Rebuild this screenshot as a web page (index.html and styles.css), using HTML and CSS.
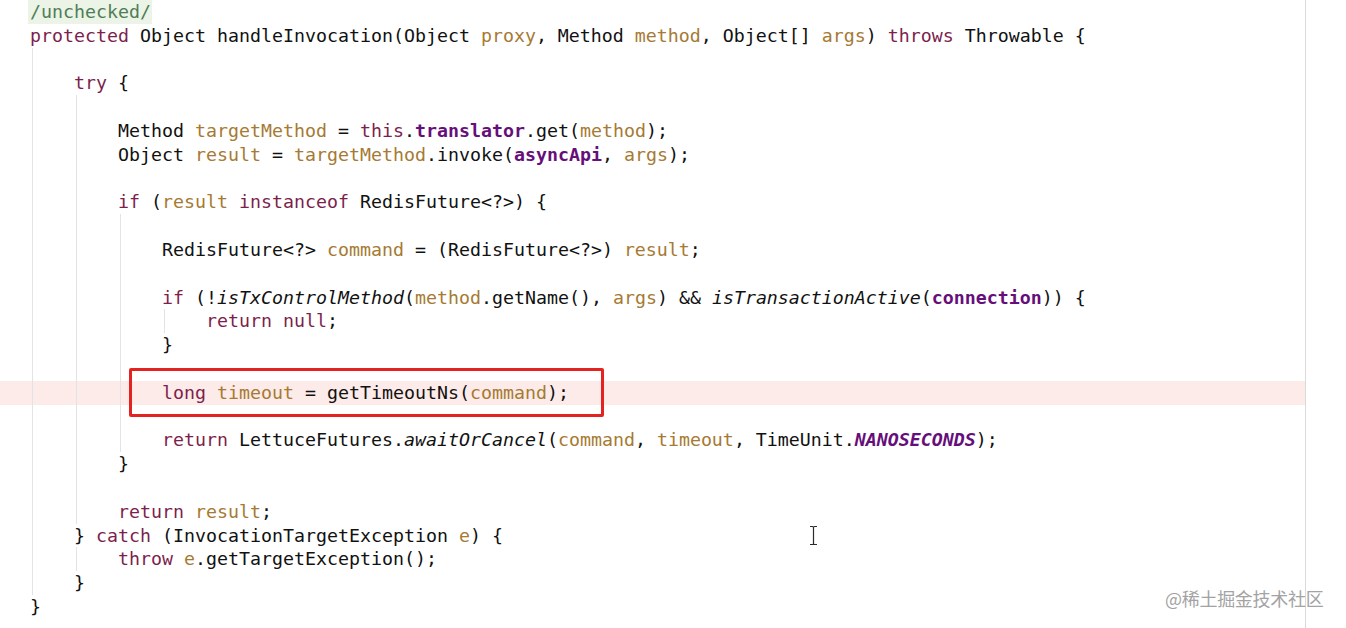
FILE: index.html
```html
<!DOCTYPE html>
<html lang="zh">
<head>
<meta charset="utf-8">
<title>handleInvocation</title>
<link rel="stylesheet" href="styles.css">
</head>
<body>
<div class="editor">
  <div class="line"><span class="ann">/unchecked/</span></div>
  <div class="line"><span class="k">protected</span> Object handleInvocation(Object <span class="v">proxy</span>, Method <span class="v">method</span>, Object[] <span class="v">args</span>) <span class="k">throws</span> Throwable {</div>
  <div class="line"><span class="g"></span></div>
  <div class="line"><span class="g"></span><span class="k">try</span> {</div>
  <div class="line"><span class="g"></span><span class="g"></span></div>
  <div class="line"><span class="g"></span><span class="g"></span>Method <span class="v">targetMethod</span> = <span class="k">this</span>.<span class="f">translator</span>.get(<span class="v">method</span>);</div>
  <div class="line"><span class="g"></span><span class="g"></span>Object <span class="v">result</span> = <span class="v">targetMethod</span>.invoke(<span class="f">asyncApi</span>, <span class="v">args</span>);</div>
  <div class="line"><span class="g"></span><span class="g"></span></div>
  <div class="line"><span class="g"></span><span class="g"></span><span class="k">if</span> (<span class="v">result</span> <span class="k">instanceof</span> RedisFuture&lt;?&gt;) {</div>
  <div class="line"><span class="g"></span><span class="g"></span><span class="g"></span></div>
  <div class="line"><span class="g"></span><span class="g"></span><span class="g"></span>RedisFuture&lt;?&gt; <span class="v">command</span> = (RedisFuture&lt;?&gt;) <span class="v">result</span>;</div>
  <div class="line"><span class="g"></span><span class="g"></span><span class="g"></span></div>
  <div class="line"><span class="g"></span><span class="g"></span><span class="g"></span><span class="k">if</span> (!<span class="i">isTxControlMethod</span>(<span class="v">method</span>.getName(), <span class="v">args</span>) &amp;&amp; <span class="i">isTransactionActive</span>(<span class="f">connection</span>)) {</div>
  <div class="line"><span class="g"></span><span class="g"></span><span class="g"></span><span class="g"></span><span class="k">return null</span>;</div>
  <div class="line"><span class="g"></span><span class="g"></span><span class="g"></span>}</div>
  <div class="line"><span class="g"></span><span class="g"></span><span class="g"></span></div>
  <div class="line hl"><span class="g"></span><span class="g"></span><span class="g"></span><span class="k">long</span> <span class="v">timeout</span> = getTimeoutNs(<span class="v">command</span>);<span class="mark"></span></div>
  <div class="line"><span class="g"></span><span class="g"></span><span class="g"></span></div>
  <div class="line"><span class="g"></span><span class="g"></span><span class="g"></span><span class="k">return</span> LettuceFutures.<span class="i">awaitOrCancel</span>(<span class="v">command</span>, <span class="v">timeout</span>, TimeUnit.<span class="fi">NANOSECONDS</span>);</div>
  <div class="line"><span class="g"></span><span class="g"></span>}</div>
  <div class="line"><span class="g"></span><span class="g"></span></div>
  <div class="line"><span class="g"></span><span class="g"></span><span class="k">return</span> <span class="v">result</span>;</div>
  <div class="line"><span class="g"></span>} <span class="k">catch</span> (InvocationTargetException <span class="v">e</span>) {</div>
  <div class="line"><span class="g"></span><span class="g"></span><span class="k">throw</span> <span class="v">e</span>.getTargetException();</div>
  <div class="line"><span class="g"></span>}</div>
  <div class="line">}</div>
</div>
<svg class="cursor" width="9" height="21" viewBox="0 0 9 21"><path d="M1 1.5h2.5M5.5 1.5H8M4.5 2v17M1 19.5h2.5M5.5 19.5H8M3.5 1.5q1 0 1 1M5.5 1.5q-1 0-1 1M3.5 19.5q1 0 1-1M5.5 19.5q-1 0-1-1" stroke="#2b2b2b" stroke-width="1.2" fill="none"/></svg>
<div class="watermark">@稀土掘金技术社区</div>
</body>
</html>
```
FILE: styles.css
```css
html, body {
  margin: 0;
  padding: 0;
  background: #ffffff;
}
body {
  width: 1346px;
  height: 628px;
  overflow: hidden;
  position: relative;
}
.editor {
  width: 1305px;
  height: 628px;
  border-right: 1px solid #dadada;
  box-sizing: content-box;
  font-family: "DejaVu Sans Mono", "Liberation Mono", monospace;
  font-size: 18.27px;
  color: #111111;
}
.line {
  height: 23.8px;
  line-height: 23.8px;
  white-space: pre;
  padding-left: 30px;
  position: relative;
}
.line.hl {
  background: #fcebe9;
}
.g {
  display: inline-block;
  width: 44px;
  height: 23.8px;
  vertical-align: top;
  background: linear-gradient(#e3e3e3, #e3e3e3) 2px 0 / 1px 100% no-repeat;
}
.ann {
  display: inline-block;
  height: 23.8px;
  vertical-align: top;
  background: #ebf4e6;
  color: #4f7d58;
  margin-left: -2px;
  padding: 0 1px 0 2px;
}
.k { color: #7d1f4e; }
.v { color: #a67a33; }
.f { color: #660e7a; font-weight: bold; }
.i { font-style: italic; }
.fi { color: #660e7a; font-weight: bold; font-style: italic; }
.mark {
  position: absolute;
  left: 129px;
  top: -12.5px;
  width: 475px;
  height: 49px;
  box-sizing: border-box;
  border: 3px solid #e42320;
  border-radius: 2px;
}
.cursor {
  position: absolute;
  left: 809px;
  top: 525px;
}
.watermark {
  position: absolute;
  left: 1165px;
  top: 586px;
  font-family: "Noto Sans CJK SC", "Noto Sans", sans-serif;
  font-size: 18px;
  line-height: 24px;
  color: #a3a3a3;
  letter-spacing: -0.3px;
}
```
